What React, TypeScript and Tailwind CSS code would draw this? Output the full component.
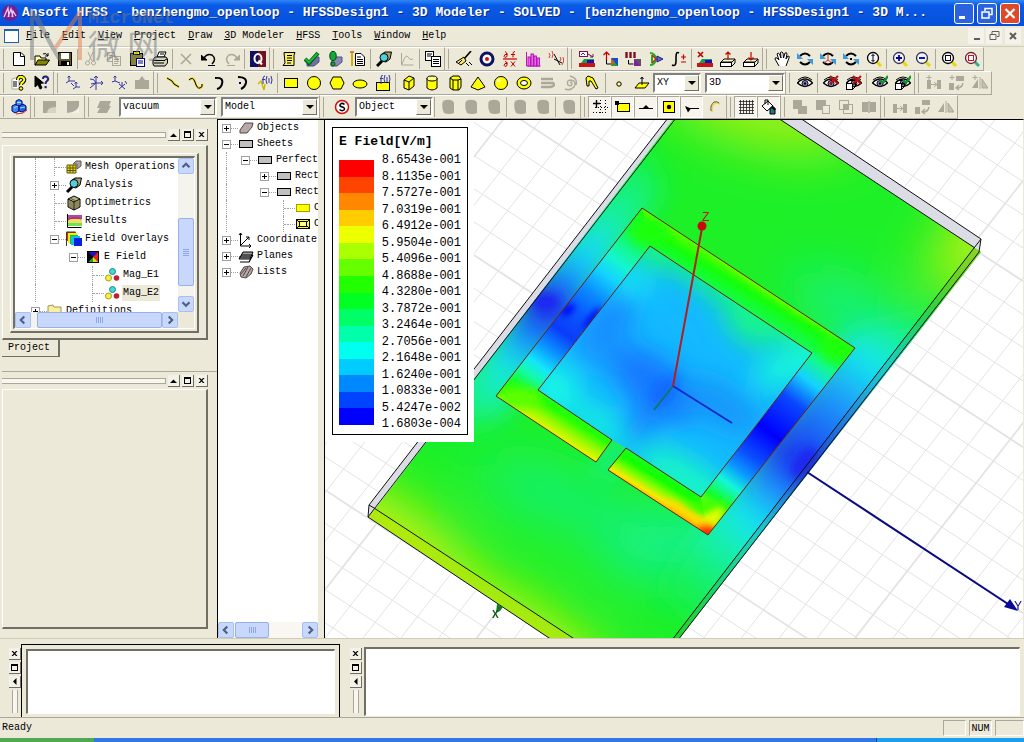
import type { ReactNode } from "react";
import clsx from "clsx";

const BK = "#000";
const YL = "#ffff00";
const NV = "#000080";
const RD = "#c00000";
const GY = "#aca899";

const poly = (points: string, fill = YL, stroke = BK) => <polygon points={points} fill={fill} stroke={stroke} />;
const line = (d: string, stroke = BK, w = 1) => <path d={d} fill="none" stroke={stroke} strokeWidth={w} />;
const rect = (x: number, y: number, width: number, height: number, fill = YL, stroke = BK) => (
  <rect x={x} y={y} width={width} height={height} fill={fill} stroke={stroke} />
);

const EYE = (
  <>
    <path d="M0.5 8 Q8 0 15.5 8 Q8 15 0.5 8Z" fill="#fff" stroke={BK} strokeWidth="1.4" />
    <path d="M1 5 Q8 -1 15 5" fill="none" stroke={BK} />
    <circle cx="8" cy="8.5" r="3" fill="#8a8ad8" stroke={BK} />
    <circle cx="8" cy="8.5" r="1.2" fill={BK} />
  </>
);
const EYE_BOX = (
  <>
    {EYE}
    {rect(0.5, 8.5, 6, 6, "#fff")}
    {line("M0.5 8.5 l3 -3 h6 v6 l-3 3 M6.5 8.5 l3 -3")}
  </>
);
const ROTATE = (
  <>
    {line("M3 5 Q8 0 13 5", BK, 2)}
    {line("M3 11 Q8 16 13 11", BK, 2)}
    <path d="M0 2 v6 h6z" fill="#3a9be0" />
    <path d="M16 14 v-6 h-6z" fill="#3a9be0" />
  </>
);
const lens = (ring: string, inside: ReactNode, handle = "#e8d800") => (
  <>
    {line("M10 10 l5 5", handle, 3)}
    <circle cx="7" cy="7" r="5.5" fill="#f4f4ff" stroke={ring} strokeWidth="1.3" />
    {inside}
  </>
);
const LAYERS = (
  <>
    <rect x="0" y="12" width="16" height="4" fill="#c81414" />
    <path d="M2 12 l3 -4 h10 v4z" fill="#10a050" />
    <path d="M8 12 v-3 h7 v3z" fill="#1414b4" />
  </>
);
const MIRROR = (
  <>
    <path d="M6 4 v9 H0z" fill={GY} />
    {line("M8 2 v12", GY)}
    <path d="M10 4 v9 h6z" fill="#c4c0b0" stroke={GY} />
  </>
);
const DUPLICATE = (
  <>
    <rect x="1" y="5" width="4" height="9" fill={GY} />
    <rect x="11" y="5" width="4" height="9" fill={GY} />
    {line("M5 9.5 h6 M8 7 l3 2.5 l-3 2.5", GY)}
  </>
);
const TURN = (
  <>
    <rect x="7" y="1" width="8" height="5" fill={GY} />
    <rect x="0" y="8" width="5" height="7" fill={GY} />
    {line("M14 8 q-1 5 -6 5 M10 10 l-3 3 l3 2", GY, 1.4)}
  </>
);
const BOARD = (
  <>
    {poly("4,8 15,8 12,11 1,11", "#ffffc0")}
    {rect(0.5, 11.5, 11, 4, "#fff")}
    {line("M12 15 l3 -3 v-4")}
  </>
);
const PLUS = line("M3 0 v5 M0.5 2.5 h5", GY);

const ICONS: Record<string, ReactNode> = {
  new: <>{poly("2.5,1.5 10,1.5 13.5,5 13.5,14.5 2.5,14.5", "#fff")}{line("M9.5 1.5 v4 h4")}</>,
  open: <>{poly("1,14 1,5 6,5 7,7 12,7 12,9", "#ffffa0")}{poly("1,14 4,9 15.5,9 12,14", "#848400")}{line("M9 3 q3 -2 5 2 M11 5 h3 v-3")}</>,
  save: <>{rect(1.5, 1.5, 13, 13, "#5c5c20")}<rect x="4" y="2" width="8" height="6" fill="#fff" /><rect x="4" y="10" width="9" height="5" fill={BK} /><rect x="10" y="11" width="2" height="3" fill="#fff" /></>,
  cut: <>{line("M5 1 L9 10 M10 1 L6 10", GY)}<circle cx="4.5" cy="12" r="2" fill="none" stroke={GY} /><circle cx="10.5" cy="12" r="2" fill="none" stroke={GY} /></>,
  copy: <>{rect(1.5, 1.5, 7, 9, "#ece9d8", GY)}{rect(6.5, 5.5, 8, 9, "#ece9d8", GY)}{line("M3 4.5 h4 M3 6.5 h3 M8 8.5 h5 M8 10.5 h5 M8 12.5 h4", GY)}</>,
  paste: <>{rect(1.5, 2.5, 12, 12, "#84843c")}{rect(4.5, 0.5, 6, 3, YL)}{rect(7.5, 7.5, 8, 8, "#fff", NV)}{line("M9 10 h5 M9 12 h5", NV)}</>,
  print: <>{poly("5,6 7,1 14,1 12,6", "#fff")}{poly("1,9 3,6 14,6 15.5,8 15.5,12 13,15 2,15 1,13", "#d0d0c0")}{line("M1 9.5 h12 M2 12 h10 M8 3 h4 M13 9 l2 -1")}<rect x="9" y="10" width="2" height="1" fill={YL} /></>,
  del: line("M3 3 L13 13 M13 3 L3 13", GY, 1.6),
  undo: <>{line("M3 7 q3 -5 8 -3 q5 4 0 9", BK, 1.5)}{poly("0,4 6,9 0,9", BK)}{line("M7 14.5 h7", BK)}</>,
  redo: <>{line("M13 7 q-3 -5 -8 -3 q-5 4 0 9", GY, 1.5)}{poly("16,4 10,9 16,9", GY, GY)}{line("M3 14.5 h8", GY)}</>,
  q: <><rect x="0" y="0" width="8" height="16" fill="#101060" /><rect x="8" y="0" width="8" height="16" fill="#701020" /><ellipse cx="8" cy="7.5" rx="3.5" ry="4.5" fill="none" stroke="#fff" strokeWidth="2" />{line("M8.5 9.5 l3.5 4", "#fff", 2)}</>,
  list: <>{poly("3,1.5 14,1.5 13,4 13,14.5 2,14.5 4,12", "#f8f060")}{line("M6 4.5 h5 M6 7 h5 M6 9.5 h5 M6 12 h4")}</>,
  check: <>{poly("3,12 9,6 15,6 15,11 10,15 3,15", "#7070a8", "#505080")}{line("M1 8 L5 12 L14 2", "#005a10", 4)}{line("M1.5 8 L5 11.5 L13.5 2.5", "#18b838", 2.2)}</>,
  run: <>{poly("4,11 9,6 15,6 15,11 10,15 4,15", "#8888b4", "#505080")}<ellipse cx="6" cy="5" rx="3.2" ry="4.6" fill="#18a838" stroke="#004c10" /><circle cx="6" cy="13" r="2" fill="#18a838" stroke="#004c10" /></>,
  notes: <>{line("M2 2 v13", "#d0b000", 2)}{poly("5.5,2.5 11,2.5 14.5,6 14.5,14.5 5.5,14.5", "#fff")}{line("M7 6 h4 M7 8.5 h6 M7 10.5 h6 M7 12.5 h6")}{line("M0 1 h4", RD)}</>,
  find: <>{line("M6 10 L1 15", BK, 3)}{poly("6,3 9,1 15.5,1 14,8 10,11 6,10", "#b0a070")}<circle cx="8" cy="6.5" r="4" fill="#50d0d8" stroke={BK} /></>,
  plot: <>{line("M2.5 2 v12 h12", GY)}{line("M3 13 Q7 2 9 6 T14 8", GY)}</>,
  pages: <>{rect(0.5, 0.5, 8, 9, "#fff")}{rect(6.5, 5.5, 9, 10, "#fff")}{line("M2 3 h5 M2 5 h4 M8 8.5 h6 M8 10.5 h6 M8 12.5 h6")}</>,
  broom: <>{line("M15 0 L8 8", BK, 1.6)}{poly("8,6 10,10 5,14 0,11", "#f8e860")}{line("M10 12 l3 3 M13 11 l3 3 M3 12 l3 -3")}</>,
  target: <><circle cx="8" cy="8" r="6" fill="#fff" stroke="#101060" strokeWidth="3" /><circle cx="8" cy="8" r="2" fill="#d01010" /></>,
  deriv: <>{line("M1 8 h14", RD, 1.2)}{line("M5 2.5 q1 4 -2 4 q-2 -1 0 -3 h2 q0 -2 -2 -3 M13 0.5 q-2 0 -2 2 v4 M9 3.5 h4", RD)}{line("M5 11.5 q1 4 -2 4 q-2 -1 0 -3 h2 q0 -2 -2 -2 M9 10.5 l4 5 M13 10.5 l-4 5", RD)}</>,
  bars: <>{line("M1.5 1 v14 h14", "#c010c0")}{[3, 6, 9, 12].map((x, i) => <rect key={x} x={x} y={[6, 3, 5, 7][i]} width="2.4" height={[9, 12, 10, 8][i]} fill="#f070f0" stroke="#b010b0" />)}</>,
  wave: <>{line("M6 3 L12 14 M6 8 L14 12", BK)}{line("M1 2 q2 2 0 5 M4 0 q2 3 0 7 M12 6 q2 2 0 4 M15 6 q2 4 -1 8", "#d04040")}</>,
  layers: <>{rect(0.5, 0.5, 8, 5, "#fff", "#801050")}{line("M2 4 l2 -2 l2 2 M9 3 l5 3 m0 -3 v3 h-3", "#801050")}{LAYERS}</>,
  axisup: <>{line("M4.5 10 V1 M1.5 4 L4.5 1 L7.5 4", RD, 1.2)}{line("M4.5 9 v4 h5", BK)}<rect x="9" y="7" width="7" height="8" fill="#20a030" /><path d="M9 7 h7 v8z" fill="#1050d0" /><path d="M9 7 l3.5 4 l-3.5 4z" fill="#d06020" /></>,
  cols: <>{line("M1.5 1 v6 M5.5 1 v6 M9.5 1 v6", "#801020", 2.4)}{line("M3.5 9 v4 h5", BK)}<rect x="9" y="8" width="7" height="7" fill="#8020a0" /><path d="M9 8 h7 v7z" fill="#605060" /></>,
  pattern: <>{line("M2 2 q5 0 6 6 q-1 6 -6 6 M4 4 v8", "#20b020", 2)}{line("M4 4 L8 8 L4 12", "#d02020", 1.4)}{poly("9,5 15,8 9,11", "#6060d0", "#202080")}</>,
  integral: <>{line("M8 2 q-3 -2 -3 4 v4 q0 6 -4 4", BK, 1.6)}{line("M10 6 h5 M12.5 3.5 v5 M10 11 h5", RD, 1.2)}</>,
  layersx: <>{line("M1 1 l5 5 M6 1 l-5 5", RD, 1.6)}{LAYERS}</>,
  boardup: <>{BOARD}{line("M8 9 V1 M5.5 3.5 L8 1 L10.5 3.5", RD, 1.2)}</>,
  boarddown: <>{BOARD}{line("M8 1 V9 M5.5 6.5 L8 9 L10.5 6.5", RD, 1.2)}</>,
  hand: <path d="M5 15 L1 8 Q1 6 3 7 L5 9 L3 3 Q4 1 5.5 3 L7 7 L6.5 1.5 Q8 0 9 2 L9.5 7 L11 2 Q13 1 13 3 L12 8 L14 5 Q16 5 15 7 L12 15" fill="#fff" stroke={BK} />,
  rotate: ROTATE,
  rotateaxis: <>{ROTATE}{line("M8 3 v6 l-4 3 M8 9 l4 3", "#d03030")}</>,
  rotatept: <>{ROTATE}<rect x="7" y="7" width="2" height="2" fill={BK} /></>,
  zoom: lens(BK, line("M7 3.5 v7 M5.5 5 L7 3.5 L8.5 5 M5.5 9 L7 10.5 L8.5 9", BK)),
  zoomin: lens("#303050", line("M4 7 h6 M7 4 v6", "#0000a0", 1.8)),
  zoomout: lens("#303050", line("M4 7 h6", "#0000a0", 1.8)),
  fit: lens(BK, rect(4.5, 4.5, 5, 5, "#fff")),
  fitsel: lens("#702030", rect(4.5, 4.5, 5, 5, "#fff", "#d01010"), "#30b090"),
  helptopic: <>{poly("1,4 8,2 8,14 1,14", "#fff", GY)}{line("M2 7 h4 M2 9 h4 M2 11 h4")}{line("M7 5 q0 -4 4 -3 q4 2 1 5 q-2 1 -2 3", BK, 4)}{line("M7 5 q0 -4 4 -3 q4 2 1 5 q-2 1 -2 3", YL, 2)}<circle cx="10" cy="13.5" r="1.8" fill={YL} stroke={BK} /></>,
  helpptr: <>{poly("1,1 1,12 4,9.5 6,14 8,13 6,8.5 9.5,8", BK)}{line("M9 4 q0 -3 3 -2.5 q4 2 1 4.5 q-1.5 1 -1.5 3", "#202080", 2)}<rect x="10.5" y="11" width="2.2" height="2.2" fill="#202080" /></>,
  cs1: line("M4 1 v5 h6 M4 6 L1 8 M2.5 2.5 L4 1 L5.5 2.5 M11 7 v5 h4 M11 12 L8 14 M9.5 8.5 L11 7 L12.5 8.5 M6 8 l3 3", "#3434a4"),
  cs2: line("M8 1 v14 M8 8 h7 M8 8 L2 13 M6 3 L8 1 L10 3 M2 4 q4 -1 6 4 M13 6 l2 2 l-2 2 M3 9 l5 -1", "#3434a4"),
  cs3: line("M4 1 v5 l5 2 M4 6 L1 7 M2.5 2.5 L4 1 L5.5 2.5 M8 9 l6 5 M8 14 l6 -5 M11 7 v5 M14 6 l2 3", "#3434a4"),
  csgrey: <><rect x="1" y="5" width="14" height="9" fill={GY} /><path d="M5 5 l3 -4 l3 4z" fill={GY} /></>,
  seg: <>{line("M2 3 L7 6 L9 9 L14 12", "#e8d820", 2.4)}{line("M2 3 L7 6 L9 9 L14 12", BK)}</>,
  spline: <>{line("M1 5 q4 -4 6 2 q2 7 5 6 q3 -1 2 -4", "#e8d820", 2.4)}{line("M1 5 q4 -4 6 2 q2 7 5 6 q3 -1 2 -4", BK)}</>,
  arc3: line("M4 3 q9 -1 7 6 q-1 4 -5 5", BK, 2),
  arcc: <>{line("M4 2 q9 0 8 6 q-1 4 -5 6", BK, 2)}<rect x="5" y="7" width="2" height="2" fill={NV} /></>,
  eqn: <>{line("M1 9 l3 -3 l3 9 l1 -6", "#c8b800", 1.4)}{line("M8 1 q-2 0 -2 3 v5 M5 4.5 h3 M10 1 q-2 4 0 8 M12 3 v5 M14 1 q2 4 0 8", "#3434a4")}</>,
  rect: rect(1.5, 3.5, 13, 9),
  circle: <circle cx="8" cy="8" r="6.5" fill={YL} stroke={BK} />,
  hexagon: poly("1,8 4,2 12,2 15,8 12,14 4,14"),
  ellipse: <ellipse cx="8" cy="9" rx="7" ry="4" fill={YL} stroke={BK} />,
  eqnsurf: <>{rect(1.5, 7.5, 13, 8)}{line("M8 0 q-2 0 -2 3 v6 M5 3.5 h3 M10 0 q-2 4 0 8 M12 2 v5 M14 0 q2 4 0 8", "#3434a4")}</>,
  box: <>{poly("3,5 8,1 13,3 13,11 8,15 3,13")}{line("M3 5 l5 2 l5 -4 M8 7 v8")}</>,
  cylinder: <><path d="M3 3 v10 q5 4 10 0 V3z" fill={YL} stroke={BK} /><ellipse cx="8" cy="3.5" rx="5" ry="2.5" fill="#ffff90" stroke={BK} /></>,
  prism: <>{poly("3,3 6,1 12,1 14,4 14,12 12,15 6,15 3,13")}{line("M3 3 l3 2 h5 l3 -1 M6 5 v10 M11 5 v10")}</>,
  cone: poly("8,2 15,12 8,15 1,12"),
  sphere: <><circle cx="8" cy="8" r="6.5" fill={YL} stroke={BK} /><circle cx="6" cy="5.5" r="2" fill="#ffffb0" /></>,
  torus: <><ellipse cx="8" cy="8" rx="7" ry="6" fill={YL} stroke={BK} /><ellipse cx="8" cy="8" rx="3.5" ry="2.5" fill="#fff" stroke={BK} /></>,
  helix: line("M2 4 h12 M2 8 h12 q3 3 -3 4 h-9", GY, 2.4),
  spiral: line("M8 8 q2 -2 2 1 q-1 3 -4 1 q-2 -5 3 -5 q6 1 3 7 q-4 4 -9 2 M8 1 q8 2 6 9", GY, 1.4),
  bond: poly("1,3 3,1 8,3 13,13 11,14 6,6 4,6 4,11 2,11"),
  point: <circle cx="8" cy="9" r="2.2" fill="#ffff80" stroke={BK} />,
  plane: <>{poly("1,13 5,8 15,8 11,13")}{line("M8 10 V2 M6.5 4 L8 2 L9.5 4")}</>,
  eye: EYE,
  eyex: <>{EYE}{line("M7 1 l8 8 M15 1 l-8 8", "#c01010", 2)}</>,
  eyeboxx: <>{EYE_BOX}{line("M7 1 l8 8 M15 1 l-8 8", "#c01010", 2)}</>,
  eyeok: <>{EYE}{line("M8 5 l3 3 l5 -7", "#109030", 2.2)}</>,
  eyeboxok: <>{EYE_BOX}{line("M8 5 l3 3 l5 -7", "#109030", 2.2)}</>,
  dupplus: <>{DUPLICATE}{PLUS}</>,
  turnplus: <>{TURN}{PLUS}</>,
  mirrorplus: <>{MIRROR}{PLUS}</>,
  dup: DUPLICATE,
  turn: TURN,
  mirror: MIRROR,
  cubes: <>{poly("5,2 8,0.5 11,2 11,6 8,7.5 5,6", "#3c8cf0", NV)}{poly("1,7 4,5.5 8,7 8,12 4,14 1,12", "#3c8cf0", NV)}{poly("8,7 12,5 15,7 15,11 11,13 8,12", "#2068d8", NV)}{line("M3 9 l4 -2 M9 9 l5 -1 M6 3.5 h4", "#b0d8ff")}{line("M5 15 l7 -1 l4 -3", "#c03030")}</>,
  corner1: <><path d="M1 2 h13 v12 H1z" fill={GY} /><path d="M5 14 q0 -6 9 -6 v6z" fill="#d8d4c4" /></>,
  corner2: <><path d="M2 2 h12 v12 H2z" fill={GY} /><path d="M2 14 q10 -1 12 -7 v7z" fill="#f4f2e8" /></>,
  stack: <path d="M4 2 h11 l-2 5 h2 l-4 7 H1 l3 -5 H1z" fill={GY} />,
  s: <><circle cx="8" cy="8" r="6.5" fill="#fff" stroke="#d01010" strokeWidth="1.5" />{line("M10.5 5.5 q-2 -2 -4 -.5 q-2 2 2 3 q3 1 1.5 3 q-2 1.5 -4.5 -.5", BK, 1.5)}</>,
  blob: <path d="M4 1.500 Q8 0 12 1.500 Q14.500 3 14 6 V14 Q9 16 4 14 L2.500 10 Q2 6 2.500 3z" fill={GY} />,
  snapgrid: <><path d="M3 8.500 h13 M8.500 1 v15 M13.500 1 v15 M1 13.500 h15" stroke={BK} strokeDasharray="1 2" fill="none" />{line("M4.5 1 v8 M1 4.5 h7", BK, 1.4)}</>,
  snapvertex: <>{rect(2.5, 4.5, 12, 8)}<rect x="0" y="2" width="4" height="4" fill={BK} /></>,
  snapedge: <>{line("M1 9.5 h14", BK)}<path d="M5 9 l3 -3 l3 3z" fill={BK} /></>,
  snapcenter: <>{rect(2.5, 2.5, 11, 11)}<circle cx="8" cy="8" r="2.2" fill={BK} /></>,
  snapmid: <>{line("M2 9.5 h13", BK)}<path d="M1 7 l6 2.5 l-3 4z" fill={BK} /></>,
  snapquad: <>{line("M5 13 q-1 -6 3 -9 q3 -1 5 1", "#e8d860", 2)}{line("M4 12 q-1 -6 3 -9 q3 -1 5 1", "#605c40")}</>,
  grid: line("M2.5 1 v14 M5.5 1 v14 M8.5 1 v14 M11.5 1 v14 M14.5 1 v14 M1 2.5 h15 M1 5.5 h15 M1 8.5 h15 M1 11.5 h15 M1 14.5 h15", "#202020", 0.8),
  fill: <>{poly("1,7 7,2 12,7 6,12", "#fff")}{line("M4 5 V1 h3 v5")}{poly("9,9 14,9 14,15 9,15", "#207880")}{line("M11 7 l3 4", BK, 2)}</>,
  unite: <path d="M1 1 h9 v6 h5 v8 H6 v-5 H1z" fill={GY} />,
  subtract: <><rect x="1" y="1" width="10" height="10" fill={GY} />{rect(7.5, 6.5, 7, 8, "#ece9d8", GY)}</>,
  intersect: <>{rect(1.5, 1.5, 9, 9, "none", GY)}{rect(5.5, 5.5, 9, 9, "none", GY)}<rect x="6" y="6" width="4" height="4" fill={GY} /></>,
  split: <><rect x="1" y="3" width="6" height="10" fill={GY} /><rect x="9" y="3" width="6" height="10" fill={GY} />{line("M8 2 v12", "#8c8878")}</>,
  mesh: <>{poly("1,6 10,6 10,14 1,14", "#e8d820", "#605800")}{poly("7,5 10,2 15,2 15,7 11,10 11,5", "#b0a0a0", "#605858")}{line("M1 9 h9 M1 11.5 h9 M4 6 v8 M7 6 v8", "#605800")}</>,
  optimetrics: <>{poly("2,4 8,1 14,4 14,12 8,15 2,12", "#b8b480")}{line("M2 4 l6 3 l6 -3 M8 7 v8")}{line("M4 6 v7 M6 7 v7 M10 7 v7 M12 6 v7 M4 3 l6 3", "#605c30")}</>,
  results: <><rect x="2" y="2" width="14" height="4" fill="#a848b0" /><rect x="2" y="6" width="14" height="4" fill="#e8e060" /><rect x="2" y="10" width="14" height="3" fill="#70e050" />{line("M1.5 1 v13.5 h14", BK)}{line("M2 7 q6 -4 13 -1", "#d02020")}</>,
  overlays: <><rect x="0" y="1" width="10" height="9" fill="#f02010" /><rect x="2" y="2" width="9" height="10" fill="#f8f000" /><rect x="4" y="4" width="8" height="9" fill="#10c040" /><rect x="5" y="5" width="9" height="9" fill="#10c0e0" /><rect x="8" y="7" width="8" height="8" fill="#0820e0" />{line("M0.5 15 V1 h9", "#204030")}</>,
  efield: <><rect x="2" y="2" width="12" height="12" fill={BK} /><path d="M3 3 h10 l-5 5z" fill="#1818c0" /><path d="M13 3 v10 l-5 -5z" fill="#f02020" /><path d="M13 13 H3 l5 -5z" fill="#20a030" /><path d="M3 13 V3 l5 5z" fill="#100808" /><path d="M8 8 l5 5 h-5z" fill="#f0e000" /></>,
  mag: <><circle cx="8.5" cy="4.5" r="3" fill="#40d8d8" stroke="#208888" /><circle cx="4.5" cy="11" r="3" fill="#f8f040" stroke="#a0a020" /><circle cx="12.5" cy="11" r="2.8" fill="#c02028" /></>,
  folder: poly("1,14 1,3 6,2 7,4 14,4 14,14", "#f8f0a0", "#a09850"),
  solid: poly("2,10 7,3 15,3 14,7 9,13 2,13", "#b8a8a8", "#504848"),
  sheet: rect(1.5, 4.5, 13, 7, "#c0c0c0"),
  cover: rect(1.5, 4.5, 13, 7, YL, "#a0a000"),
  create: <>{rect(1.5, 3.5, 13, 9)}{rect(4.5, 5.5, 7, 5, "#ffffa0")}{line("M1 3 l3 3 M15 3 l-3 3 M1 13 l3 -3 M15 13 l-3 -3")}</>,
  coords: line("M2.5 1 v13 h10 M1 3 l1.5 -2 l1.5 2 M3 13 l8 -8 M8 5 h3 v3 M11 12 l2 2 l-2 2", BK),
  planes: <>{poly("1,11 5,4 15,4 12,11", "#a0a0a0")}{line("M2 14 h9 l4 -7 M1 9 h12 M3 7 h12", BK, 1.2)}</>,
  lists: <>{poly("2,9 6,3 12,2 15,5 13,10 8,14 3,13", "#b8a8a8", "#504848")}{line("M5 12 l5 -9 M8 13 l5 -9 M3 10 l5 -6", "#504848")}</>,
};

function Icon({ name }: { name: string }) {
  return (
    <svg viewBox="0 0 16 16" className="h-4 w-4 shrink-0" aria-hidden="true">
      {ICONS[name]}
    </svg>
  );
}

// "|" in a list of tools stands for a separator
function Tools({ items, pressed = false }: { items: string; pressed?: boolean }) {
  return (
    <>
      {items.split(" ").map((name, i) =>
        name === "|" ? (
          <span key={i} className="mx-px h-5 w-px bg-[#aca899]" />
        ) : (
          <button
            key={i}
            type="button"
            aria-label={name}
            className={clsx(
              "flex h-[22px] w-[23px] shrink-0 items-center justify-center",
              pressed && name !== "snapquad" && "border border-[#aca899] border-r-white border-b-white bg-[#f6f4ec]",
            )}
          >
            <Icon name={name} />
          </button>
        ),
      )}
    </>
  );
}

function Group({ children }: { children: ReactNode }) {
  return (
    <div className="flex h-6 shrink-0 items-center border-t border-r border-b border-[#aca899] border-t-white">
      <span className="mx-[3px] h-5 w-px bg-[#aca899]" />
      {children}
    </div>
  );
}

function Combo({ label, value, className }: { label: string; value: string; className: string }) {
  return (
    <label className={clsx("relative block h-5 shrink-0", className)}>
      <select
        aria-label={label}
        className="h-full w-full appearance-none border-2 border-[#808080] border-r-white border-b-white bg-white px-0.5 text-[10px] leading-4 outline-none"
      >
        <option>{value}</option>
      </select>
      <span className="pointer-events-none absolute inset-y-0.5 right-0.5 flex w-[15px] items-center justify-center border border-white border-r-[#716f64] border-b-[#716f64] bg-[#ece9d8]">
        <span className="border-x-4 border-t-4 border-x-transparent border-t-black" />
      </span>
    </label>
  );
}

const MENUS = ["File", "Edit", "View", "Project", "Draw", "3D Modeler", "HFSS", "Tools", "Window", "Help"];

function TitleBar() {
  return (
    <header className="flex h-[26px] shrink-0 items-center bg-linear-to-b from-[#2f86f6] via-[#0a5ae8] via-20% to-[#0550d8] pr-1 pl-0.5">
      <svg viewBox="0 0 16 16" className="h-4 w-4 shrink-0" aria-hidden="true">
        <circle cx="8" cy="8" r="8" fill="#702090" />
        <path d="M2 12 L6 3 L7 12 M6 12 L9 4 L11 12 M10 12 L11 6 L14 11" stroke="#f0c8e8" strokeWidth="1.3" fill="none" />
      </svg>
      <h1 className="ml-1 min-w-0 flex-1 truncate text-[13px] leading-5 font-bold whitespace-pre text-white [text-shadow:1px_1px_0_#0a2a80]">
        Ansoft HFSS - benzhengmo_openloop - HFSSDesign1 - 3D Modeler - SOLVED - [benzhengmo_openloop - HFSSDesign1 - 3D M...
      </h1>
      <div className="flex gap-[3px]">
        <button type="button" aria-label="Minimize" className="h-[21px] w-5 rounded-[3px] border border-white bg-[#2a62e0]">
          <svg viewBox="0 0 18 19" className="h-full w-full"><path d="M4 13.5 h6" stroke="#fff" strokeWidth="3" /></svg>
        </button>
        <button type="button" aria-label="Restore" className="h-[21px] w-5 rounded-[3px] border border-white bg-[#2a62e0]">
          <svg viewBox="0 0 18 19" className="h-full w-full" fill="none" stroke="#fff" strokeWidth="1.5"><path d="M7 7 V4.5 h7 v6 h-2.5" /><rect x="4" y="8" width="7" height="6" /></svg>
        </button>
        <button type="button" aria-label="Close" className="h-[21px] w-5 rounded-[3px] border border-white bg-[#dc4a28]">
          <svg viewBox="0 0 18 19" className="h-full w-full"><path d="M4.5 5 l9 9 M13.5 5 l-9 9" stroke="#fff" strokeWidth="2.2" /></svg>
        </button>
      </div>
    </header>
  );
}

function MenuBar() {
  return (
    <nav className="flex h-[21px] shrink-0 items-center border-b border-[#d0ccba] pr-0.5 pl-1">
      <span className="h-3.5 w-[15px] border border-t-2 border-[#2060b0] bg-white" />
      <div className="ml-[7px] flex gap-3">
        {MENUS.map((m) => (
          <button key={m} type="button" className="leading-4">
            <u>{m[0]}</u>
            {m.slice(1)}
          </button>
        ))}
      </div>
      <svg viewBox="0 0 54 16" className="ml-auto h-4 w-[54px]" fill="none" stroke="#605e54" aria-hidden="true">
        <rect x="0" y="0" width="16" height="16" fill="#f4f2ea" stroke="none" />
        <rect x="18" y="0" width="16" height="16" fill="#f4f2ea" stroke="none" />
        <rect x="37" y="0" width="16" height="16" fill="#f4f2ea" stroke="none" />
        <path d="M6 11 h6" strokeWidth="2" />
        <path d="M24 6 V3.5 h7 v5 h-2 M22 6.5 h6 v5 h-6z" />
        <path d="M42 5 l6 6 M48 5 l-6 6" strokeWidth="2" />
      </svg>
    </nav>
  );
}

function Toolbars() {
  return (
    <div className="shrink-0 overflow-hidden">
      <div className="flex">
        <Group><Tools items="new open save | cut copy paste print | del undo redo | q" /></Group>
        <Group><Tools items="list check run notes | find plot | pages" /></Group>
        <Group><Tools items="broom target deriv bars wave" /></Group>
        <Group><Tools items="layers axisup cols pattern integral | layersx boardup boarddown" /></Group>
        <Group><Tools items="hand rotate rotateaxis rotatept zoom | zoomin zoomout | fit fitsel" /></Group>
      </div>
      <div className="flex">
        <Group><Tools items="helptopic helpptr" /></Group>
        <Group><Tools items="cs1 cs2 cs3 csgrey" /></Group>
        <Group>
          <Tools items="seg spline arc3 arcc eqn | rect circle hexagon ellipse eqnsurf | box cylinder prism cone sphere torus helix spiral bond | point plane" />
          <Combo label="Drawing plane" value="XY" className="w-12" />
          <Combo label="Movement mode" value="3D" className="ml-1 w-20" />
        </Group>
        <Group><Tools items="eye | eyex eyeboxx | eyeok eyeboxok" /></Group>
        <Group><Tools items="dupplus turnplus mirrorplus" /></Group>
      </div>
      <div className="flex">
        <Group><Tools items="cubes" /></Group>
        <Group><Tools items="corner1 corner2" /></Group>
        <Group>
          <Tools items="stack" />
          <Combo label="Material" value="vacuum" className="ml-1 w-[98px]" />
          <Combo label="Model type" value="Model" className="ml-1 w-[98px]" />
        </Group>
        <Group>
          <span className="w-[3px]" />
          <Tools items="s" />
          <Combo label="Select by" value="Object" className="ml-0.5 w-[78px]" />
          <Tools items="| blob blob blob | blob blob | blob" />
        </Group>
        <Group><Tools items="snapgrid snapvertex snapedge snapcenter snapmid snapquad" pressed /></Group>
        <Group><Tools items="grid fill" pressed /></Group>
        <Group><Tools items="unite subtract intersect split" /></Group>
        <Group><Tools items="dup turn mirror" /></Group>
      </div>
    </div>
  );
}

type Node = { label: string; icon: string; guides: string; box?: "+" | "-"; selected?: boolean };

// guides: one character per parent level, "|" draws the dotted line down through the row
const PROJECT_TREE: Node[] = [
  { label: "Mesh Operations", icon: "mesh", guides: "|" },
  { label: "Analysis", icon: "find", guides: "|", box: "+" },
  { label: "Optimetrics", icon: "optimetrics", guides: "|" },
  { label: "Results", icon: "results", guides: "|" },
  { label: "Field Overlays", icon: "overlays", guides: "|", box: "-" },
  { label: "E Field", icon: "efield", guides: "| ", box: "-" },
  { label: "Mag_E1", icon: "mag", guides: "|  " },
  { label: "Mag_E2", icon: "mag", guides: "|  ", selected: true },
  { label: "Definitions", icon: "folder", guides: "", box: "+" },
];

const MODEL_TREE: Node[] = [
  { label: "Objects", icon: "solid", guides: "", box: "+" },
  { label: "Sheets", icon: "sheet", guides: "", box: "-" },
  { label: "Perfect", icon: "sheet", guides: "|", box: "-" },
  { label: "Rect", icon: "sheet", guides: "| ", box: "+" },
  { label: "Rect", icon: "sheet", guides: "| ", box: "-" },
  { label: "C", icon: "cover", guides: "|  " },
  { label: "C", icon: "create", guides: "|  " },
  { label: "Coordinate", icon: "coords", guides: "", box: "+" },
  { label: "Planes", icon: "planes", guides: "", box: "+" },
  { label: "Lists", icon: "lists", guides: "", box: "+" },
];

function TreeRow({ node, className }: { node: Node; className: string }) {
  return (
    <li className={clsx("flex items-center whitespace-nowrap", className)}>
      {node.guides.split("").map((g, i) => (
        <span key={i} className="flex h-full w-[19px] shrink-0 justify-start pl-1">
          {g === "|" && <span className="h-full border-l border-dotted border-[#a0a0a0]" />}
        </span>
      ))}
      {node.box ? (
        <svg viewBox="0 0 9 9" className="h-[9px] w-[9px] shrink-0" aria-hidden="true">
          <rect x="0.5" y="0.5" width="8" height="8" fill="#fff" stroke="#a0a0a0" />
          <path d={node.box === "+" ? "M2 4.5 h5 M4.5 2 v5" : "M2 4.5 h5"} stroke="#000" />
        </svg>
      ) : (
        <span className="flex h-full w-[9px] shrink-0 items-center pl-1">
          <span className="h-full border-l border-dotted border-[#a0a0a0]" />
          <span className="w-1 border-t border-dotted border-[#a0a0a0]" />
        </span>
      )}
      <span className="w-[7px] shrink-0 border-t border-dotted border-[#a0a0a0]" />
      <Icon name={node.icon} />
      <span className={clsx("ml-0.5 px-px leading-4", node.selected && "bg-[#ece9d8]")}>{node.label}</span>
    </li>
  );
}

const ARROWS = { up: "M4 9.5 L8 5.5 L12 9.5", down: "M4 6 L8 10 L12 6", left: "M9.5 4 L5.5 8 L9.5 12", right: "M6.5 4 L10.5 8 L6.5 12" };

function ScrollButton({ dir }: { dir: keyof typeof ARROWS }) {
  return (
    <button type="button" aria-label={`Scroll ${dir}`} className="h-4 w-4 shrink-0 rounded-[2px] border border-[#a8c0f0] bg-[#c8d8fc]">
      <svg viewBox="0 0 16 16" className="h-full w-full">
        <path d={ARROWS[dir]} fill="none" stroke="#4d6185" strokeWidth="2.5" />
      </svg>
    </button>
  );
}

function Thumb({ vertical, className }: { vertical?: boolean; className: string }) {
  return (
    <span className={clsx("flex items-center justify-center gap-px rounded-[2px] border border-[#98b0e8] bg-[#c8d8fc]", vertical && "flex-col", className)}>
      {[0, 1, 2, 3].map((i) => (
        <span key={i} className={clsx("bg-[#8ca8e8]", vertical ? "h-px w-1.5" : "h-1.5 w-px")} />
      ))}
    </span>
  );
}

const PANE_GLYPHS = {
  up: "M2 8 h7 L5.5 4.5z",
  left: "M7.5 2 v7 L4 5.5z",
  max: "M2 2 h7 v7 h-7z M3 4 v4 h5 v-4z",
  close: "M2.5 3 h1.5 l1.5 1.6 l1.5 -1.6 h1.5 l-2.2 2.5 l2.2 2.5 h-1.5 l-1.5 -1.6 l-1.5 1.6 h-1.5 l2.2 -2.5z",
};

function PaneButton({ glyph }: { glyph: keyof typeof PANE_GLYPHS }) {
  return (
    <button type="button" aria-label={glyph} className="h-3 w-3 shrink-0 border-r border-b border-[#716f64] bg-[#f4f2e8]">
      <svg viewBox="0 0 11 11" className="h-full w-full"><path d={PANE_GLYPHS[glyph]} fillRule="evenodd" /></svg>
    </button>
  );
}

function PaneCaption() {
  return (
    <div className="flex h-3 shrink-0 items-center">
      <span className="mr-0.5 h-[6px] flex-1 border-y border-r border-[#aca899] bg-[#f8f6ee]" />
      <span className="flex gap-[2px]">
        <PaneButton glyph="up" />
        <PaneButton glyph="max" />
        <PaneButton glyph="close" />
      </span>
    </div>
  );
}

function SideCaption() {
  return (
    <div className="flex w-3 shrink-0 flex-col items-center gap-0.5">
      <PaneButton glyph="close" />
      <PaneButton glyph="max" />
      <PaneButton glyph="left" />
      <span className="w-[6px] flex-1 border-x border-[#aca899] bg-[#f8f6ee]" />
    </div>
  );
}

function ProjectPanel() {
  return (
    <aside className="flex w-[217px] shrink-0 flex-col pl-0.5">
      <div className="flex h-[253px] shrink-0 flex-col border-b border-[#aca899] pt-2.5 pr-[9px]">
        <PaneCaption />
        <div className="mt-1 flex h-[195px] flex-col border border-r-2 border-b-2 border-white border-r-[#716f64] border-b-[#716f64] px-[7px] pt-[7px] pb-[5px]">
          <div className="min-h-0 flex-1 border border-r-2 border-b-2 border-white border-r-[#716f64] border-b-[#716f64] p-[2px]">
            <div className="flex h-full flex-col border border-t-2 border-l-2 border-[#716f64] border-r-white border-b-white">
              <div className="flex min-h-0 flex-1">
                <ul className="min-w-0 flex-1 overflow-hidden bg-white">
                  {PROJECT_TREE.map((n) => (
                    <TreeRow key={n.label} node={n} className="h-[18px] pl-4" />
                  ))}
                </ul>
                <div className="flex w-4 flex-col bg-[#f4f3ee]">
                  <ScrollButton dir="up" />
                  <span className="h-11" />
                  <Thumb vertical className="min-h-0 flex-1" />
                  <span className="h-2.5" />
                  <ScrollButton dir="down" />
                </div>
              </div>
              <div className="flex h-4 pr-4">
                <ScrollButton dir="left" />
                <span className="w-1.5 bg-[#f4f3ee]" />
                <Thumb className="flex-1" />
                <ScrollButton dir="right" />
              </div>
            </div>
          </div>
        </div>
        <button type="button" className="h-[17px] w-[58px] border-r-2 border-b border-[#716f64] pr-0.5 leading-4">
          Project
        </button>
      </div>
      <div className="flex min-h-0 flex-1 flex-col pt-[3px] pr-[9px] pb-[9px]">
        <PaneCaption />
        <div className="mt-0.5 flex-1 border border-r-2 border-b-2 border-white border-r-[#716f64] border-b-[#716f64]" />
      </div>
    </aside>
  );
}

function ModelTree() {
  return (
    <section className="flex w-[108px] shrink-0 border-t border-r border-l border-black bg-[#ece9d8] pr-1.5">
      <div className="flex min-w-0 flex-1 flex-col bg-white">
        <ul className="min-h-0 flex-1 overflow-hidden">
          {MODEL_TREE.map((n, i) => (
            <TreeRow key={i} node={n} className="h-4 pl-1" />
          ))}
        </ul>
        <div className="flex h-4 bg-[#f8f7f2]">
          <ScrollButton dir="left" />
          <Thumb className="ml-px w-[34px]" />
          <span className="flex-1" />
          <ScrollButton dir="right" />
        </div>
      </div>
    </section>
  );
}

const LEGEND_COLORS = [
  "#ff0000", "#ff4400", "#ff8800", "#ffcc00", "#eeff00", "#aaff00", "#66ff00", "#22ff00",
  "#00ff22", "#00ff66", "#00ffaa", "#00ffee", "#00ccff", "#0088ff", "#0044ff", "#0000ff",
];
const LEGEND_VALUES = [
  "8.6543e-001", "8.1135e-001", "7.5727e-001", "7.0319e-001", "6.4912e-001", "5.9504e-001",
  "5.4096e-001", "4.8688e-001", "4.3280e-001", "3.7872e-001", "3.2464e-001", "2.7056e-001",
  "2.1648e-001", "1.6240e-001", "1.0833e-001", "5.4247e-002", "1.6803e-004",
];

function Legend() {
  return (
    <div className="absolute top-0 left-0 bg-white p-[7px] pr-1.5">
      <div className="w-[136px] border border-black px-1.5 pt-1 pb-0.5">
        <h2 className="text-[13px] leading-5 font-bold">E Field[V/m]</h2>
        <div className="flex justify-between">
          <div className="mt-2 flex h-[265px] w-[35px] flex-col">
            {LEGEND_COLORS.map((c) => (
              <span key={c} className="flex-1" style={{ backgroundColor: c }} />
            ))}
          </div>
          <ul className="flex h-[280px] flex-col justify-between text-[12px] leading-4">
            {LEGEND_VALUES.map((v) => (
              <li key={v}>{v}</li>
            ))}
          </ul>
        </div>
      </div>
    </div>
  );
}

type Stops = [number, string][];

function Gradient({ id, from, to, stops }: { id: string; from: [number, number]; to: [number, number]; stops: Stops }) {
  return (
    <linearGradient id={id} gradientUnits="userSpaceOnUse" x1={from[0]} y1={from[1]} x2={to[0]} y2={to[1]}>
      {stops.map(([o, c]) => (
        <stop key={o} offset={o} stopColor={c} />
      ))}
    </linearGradient>
  );
}

// Blob of field strength: centre, radii along and across its own axis, colour, angle
function Spot({ x, y, rx, ry, c, a = 0, o = 1 }: { x: number; y: number; rx: number; ry: number; c: string; a?: number; o?: number }) {
  return <ellipse cx={x} cy={y} rx={rx} ry={ry} fill={c} opacity={o} transform={`rotate(${a} ${x} ${y})`} />;
}

const STEPS = Array.from({ length: 60 }, (_, i) => i - 30);
const BOARD_TOP = "369,517 674,118 778,118 981,252 678,640 552,640";
const LOOP = "642,208 855,348 708,535 608,470 626,448 701,497 812,353 650,246 538,390 612,440 596,462 496,396";
const HOLE = "650,246 812,353 701,497 626,448 612,440 538,390";

function FieldPlot() {
  return (
    <svg viewBox="325 120 698 518" preserveAspectRatio="xMinYMin slice" className="block h-full w-full" aria-hidden="true">
      <defs>
        <clipPath id="board"><polygon points={BOARD_TOP} /></clipPath>
        <clipPath id="loop"><polygon points={LOOP} /></clipPath>
        <clipPath id="hole"><polygon points={HOLE} /></clipPath>
        <filter id="b3" x="-50%" y="-50%" width="200%" height="200%"><feGaussianBlur stdDeviation="3" /></filter>
        <filter id="b6" x="-50%" y="-50%" width="200%" height="200%"><feGaussianBlur stdDeviation="5" /></filter>
        <filter id="b14" x="-50%" y="-50%" width="200%" height="200%"><feGaussianBlur stdDeviation="13" /></filter>
        <filter id="b26" x="-60%" y="-60%" width="220%" height="220%"><feGaussianBlur stdDeviation="26" /></filter>
        <Gradient id="stripL" from={[450, 425]} to={[655, 150]} stops={[[0, "#14f046"], [0.12, "#14f0a0"], [0.24, "#14e6e6"], [0.33, "#1496ff"], [0.43, "#1e28f0"], [0.5, "#1e46fa"], [0.56, "#14a0ff"], [0.65, "#14dcf5"], [0.78, "#14f0a0"], [1, "#14f03c"]]} />
        <Gradient id="stripR" from={[700, 600]} to={[925, 315]} stops={[[0, "#14f050"], [0.14, "#14f0a0"], [0.26, "#14e6f0"], [0.37, "#1e8cfa"], [0.45, "#1e32f0"], [0.54, "#1e5af5"], [0.68, "#1ea0fa"], [0.8, "#14e6f0"], [0.9, "#14f0a0"], [1, "#14f03c"]]} />
        <Gradient id="armL" from={[645, 215]} to={[512, 395]} stops={[[0, "#14ff14"], [0.1, "#14fa50"], [0.24, "#14f5d2"], [0.32, "#14d2ff"], [0.42, "#0a8cff"], [0.52, "#0a5aff"], [0.64, "#0a3cfa"], [0.74, "#0a96ff"], [0.82, "#14e6fa"], [0.88, "#14faaa"], [0.94, "#14ff32"], [1, "#1eff00"]]} />
        <Gradient id="armR" from={[840, 345]} to={[710, 518]} stops={[[0, "#14ff0a"], [0.12, "#14fa8c"], [0.22, "#14d2ff"], [0.34, "#0a46ff"], [0.52, "#0000ff"], [0.66, "#0a50ff"], [0.74, "#0a96ff"], [0.82, "#14f5dc"], [0.91, "#14ff28"], [1, "#b4ff00"]]} />
        <Gradient id="armT" from={[755, 278]} to={[737, 308]} stops={[[0, "#5aff00"], [0.4, "#14ff0a"], [1, "#14fa5a"]]} />
        <Gradient id="armB1" from={[546, 429]} to={[563, 402]} stops={[[0, "#e6f500"], [0.3, "#96fa00"], [0.65, "#28ff00"], [1, "#14ff28"]]} />
        <Gradient id="armB2" from={[656, 502]} to={[673, 474]} stops={[[0, "#ffb400"], [0.15, "#f5eb00"], [0.4, "#78ff00"], [0.65, "#14ff00"], [1, "#14ff28"]]} />
      </defs>

      <rect x="325" y="120" width="1400" height="1000" fill="#fff" />
      {STEPS.map((k) => (
        <g key={k} stroke="#e3e3e3" strokeWidth={k % 5 === 0 ? 1.8 : 1}>
          <line x1="325" y1={158 + 33.2 * k} x2="1725" y2={1071 + 33.2 * k} />
          <line x1={98 + 37.85 * k} y1="638" x2={523 + 37.85 * k} y2="94" />
        </g>
      ))}

      <polygon points="368,517 369,505 668,118 676,118" fill="#dcdce6" />
      <polygon points="778,118 800,118 981,239 979,252" fill="#dcdce6" />

      <g clipPath="url(#board)">
        <rect x="325" y="110" width="698" height="540" fill="#1ef028" />
        <g filter="url(#b26)">
          <Spot x={985} y={235} rx={75} ry={36} c="#b4f014" a={-50} />
          <Spot x={760} y={110} rx={100} ry={36} c="#a0f014" a={15} />
          <Spot x={390} y={540} rx={110} ry={38} c="#c8f00a" a={35} />
          <Spot x={530} y={645} rx={120} ry={36} c="#c8f00a" a={35} />
          <Spot x={555} y={495} rx={80} ry={25} c="#14f078" a={20} />
          <Spot x={670} y={545} rx={70} ry={38} c="#14f08c" />
          <Spot x={870} y={325} rx={90} ry={24} c="#14f096" a={34} />
        </g>
        <g filter="url(#b14)">
          <polygon points="420,440 640,140 665,190 500,420" fill="url(#stripL)" />
          <polygon points="690,540 850,330 960,310 720,640 660,590" fill="url(#stripR)" />
          <Spot x={615} y={458} rx={26} ry={14} c="#14f08c" a={-50} />
        </g>
        <g filter="url(#b6)">
          <Spot x={545} y={302} rx={14} ry={9} c="#1e28f0" />
          <Spot x={804} y={462} rx={18} ry={9} c="#1e28f0" a={-52} />
        </g>
      </g>
      <polygon points="369,517 374,508 576,640 552,640" fill="#b4e60a" opacity="0.6" />
      <polygon points="981,252 974,248 672,640 678,640" fill="#3c3c5a" opacity="0.16" />

      <g clipPath="url(#hole)">
        <rect x="530" y="240" width="290" height="262" fill="#14b9ff" />
        <g filter="url(#b14)">
          <Spot x={740} y={285} rx={120} ry={26} c="#14f582" a={34} />
          <Spot x={650} y={248} rx={30} ry={18} c="#14f582" a={34} />
          <Spot x={755} y={318} rx={32} ry={26} c="#14f58c" a={34} />
          <Spot x={795} y={365} rx={44} ry={18} c="#14f5dc" a={-20} />
          <Spot x={630} y={285} rx={20} ry={14} c="#14f5f0" a={34} />
          <Spot x={553} y={388} rx={26} ry={26} c="#14f5e6" a={34} />
          <Spot x={600} y={424} rx={42} ry={12} c="#14f5dc" a={34} />
          <Spot x={690} y={484} rx={60} ry={22} c="#14f5c8" a={34} />
          <Spot x={606} y={326} rx={44} ry={20} c="#148cff" a={-52} />
          <Spot x={615} y={355} rx={34} ry={18} c="#1496ff" a={20} />
          <Spot x={655} y={385} rx={50} ry={26} c="#1478ff" a={40} />
          <Spot x={720} y={405} rx={46} ry={20} c="#1496fa" a={30} />
          <Spot x={640} y={425} rx={22} ry={14} c="#1482ff" a={-50} />
        </g>
        <g filter="url(#b6)">
          <Spot x={664} y={390} rx={18} ry={10} c="#1464ff" a={-52} o={0.7} />
        </g>
      </g>

      <g clipPath="url(#loop)">
        <polygon points="642,208 855,348 812,353 650,246" fill="url(#armT)" />
        <polygon points="496,396 538,390 612,440 596,462" fill="url(#armB1)" />
        <polygon points="626,448 701,497 708,535 608,470" fill="url(#armB2)" />
        <polygon points="642,208 650,246 538,390 496,396" fill="url(#armL)" />
        <polygon points="855,348 812,353 701,497 708,535" fill="url(#armR)" />
        <g filter="url(#b6)">
          <Spot x={650} y={232} rx={20} ry={14} c="#1eff0a" />
          <Spot x={775} y={291} rx={80} ry={4} c="#8cff00" a={33} />
          <Spot x={838} y={348} rx={18} ry={14} c="#1eff0a" />
          <Spot x={518} y={398} rx={24} ry={11} c="#5aff00" />
          <Spot x={708} y={508} rx={24} ry={7} c="#3cff00" />
        </g>
        <g filter="url(#b3)">
          <Spot x={568} y={310} rx={8} ry={4} c="#0000f0" a={-40} />
          <Spot x={592} y={318} rx={14} ry={3} c="#0000f0" a={-52} />
          <Spot x={712} y={518} rx={14} ry={6} c="#e6ff00" a={-40} />
          <Spot x={692} y={518} rx={34} ry={6} c="#ffdc00" a={33} />
          <Spot x={690} y={527} rx={32} ry={4} c="#ff6400" a={33} />
          <Spot x={707} y={532} rx={11} ry={8} c="#ff3200" />
        </g>
      </g>

      <g fill="none" stroke="#101010">
        <path d="M369 505 L668 118 M368 517 L676 118 M369 505 L368 517 M369 505 L374 508 L576 640 M368 517 L552 640 M778 118 L975 248 M800 118 L981 239 L979 252 L678 640 M981 239 L974 248 L672 640" />
        <polygon points={LOOP} stroke="#6e1e14" />
      </g>

      <path d="M673 386 L654 410" stroke="#0f7864" strokeWidth="2" />
      <path d="M673 386 L732 423" stroke="#1428c8" strokeWidth="2" />
      <path d="M702 228 L673 386" stroke="#b41e1e" strokeWidth="2" />
      <circle cx="702" cy="226" r="4.5" fill="#c80a0a" />
      <text x="702" y="221" fontSize="12" fill="#c81414" className="font-[Liberation_Sans]">Z</text>
      <path d="M807 472 L1008 604" stroke="#0a0a82" strokeWidth="2" />
      <polygon points="1004,607 1010,599 1018,611" fill="#0a0a96" />
      <text x="1014" y="610" fontSize="12" fill="#0a0a82" className="font-[Liberation_Sans]">Y</text>
      <polygon points="497,604 503,607 500,611 496,613" fill="#147828" />
      <text x="492" y="618" fontSize="10" fill="#0a5a14" className="font-[Liberation_Sans] font-bold">X</text>
    </svg>
  );
}

function BottomPanes() {
  return (
    <div className="flex h-[79px] shrink-0 border-t border-[#d0ccba] pt-[5px]">
      <div className="flex w-[340px] shrink-0 pl-[9px]">
        <div className="flex py-1"><SideCaption /></div>
        <div className="flex-1 border-t border-r border-l border-black p-1 pb-[3px]">
          <div className="h-full border border-t-2 border-l-2 border-[#716f64] border-r-white border-b-white bg-white" />
        </div>
      </div>
      <div className="flex min-w-0 flex-1 pt-[3px] pr-1 pb-px pl-[10px]">
        <div className="flex pt-px pb-[3px]"><SideCaption /></div>
        <div className="ml-0.5 flex-1 border border-t-2 border-l-2 border-[#716f64] border-r-white border-b-white bg-white" />
      </div>
    </div>
  );
}

function Watermark() {
  return (
    <div className="pointer-events-none absolute top-2 left-7 flex opacity-50" aria-hidden="true">
      <svg viewBox="0 0 56 54" className="h-[54px] w-14" fill="none" strokeWidth="4">
        <path d="M4 52 V4 Q14 20 26 42" stroke="#707880" />
        <path d="M26 42 L52 4 V52" stroke="#e08050" />
        <path d="M8 6 Q24 40 32 52" stroke="#707880" />
      </svg>
      <div className="ml-1 text-[#707880]">
        <p className="text-[18px] leading-5 font-bold">MicroNet</p>
        <p className="text-[32px] leading-8 font-[Noto_Sans_CJK_SC,sans-serif]">微 网</p>
      </div>
    </div>
  );
}

export default function App() {
  return (
    <div className="relative flex h-screen flex-col overflow-hidden bg-[#ece9d8] font-[Liberation_Mono,monospace] text-[10px] text-black">
      <TitleBar />
      <MenuBar />
      <Toolbars />
      <main className="flex min-h-0 flex-1">
        <ProjectPanel />
        <ModelTree />
        <section className="relative min-w-0 flex-1 border-t border-r border-t-black border-r-[#ece9d8]">
          <FieldPlot />
          <Legend />
        </section>
      </main>
      <BottomPanes />
      <footer className="flex h-[21px] shrink-0 items-center gap-[3px] border-t border-[#aca899] pl-0.5">
        <p className="flex-1 leading-4">Ready</p>
        <span className="h-4 w-[23px] border border-[#aca899] border-r-white border-b-white" />
        <span className="flex h-4 w-[23px] items-center justify-center border border-[#aca899] border-r-white border-b-white">NUM</span>
        <span className="h-4 w-[29px] border border-[#aca899] border-r-white border-b-white" />
      </footer>
      <div className="flex h-1 shrink-0 bg-[#3078e8]">
        <span className="w-[94px] bg-[#50a850]" />
        <span className="ml-auto w-[148px] border-l border-[#104898] bg-[#18a0f0]" />
      </div>
      <Watermark />
    </div>
  );
}
